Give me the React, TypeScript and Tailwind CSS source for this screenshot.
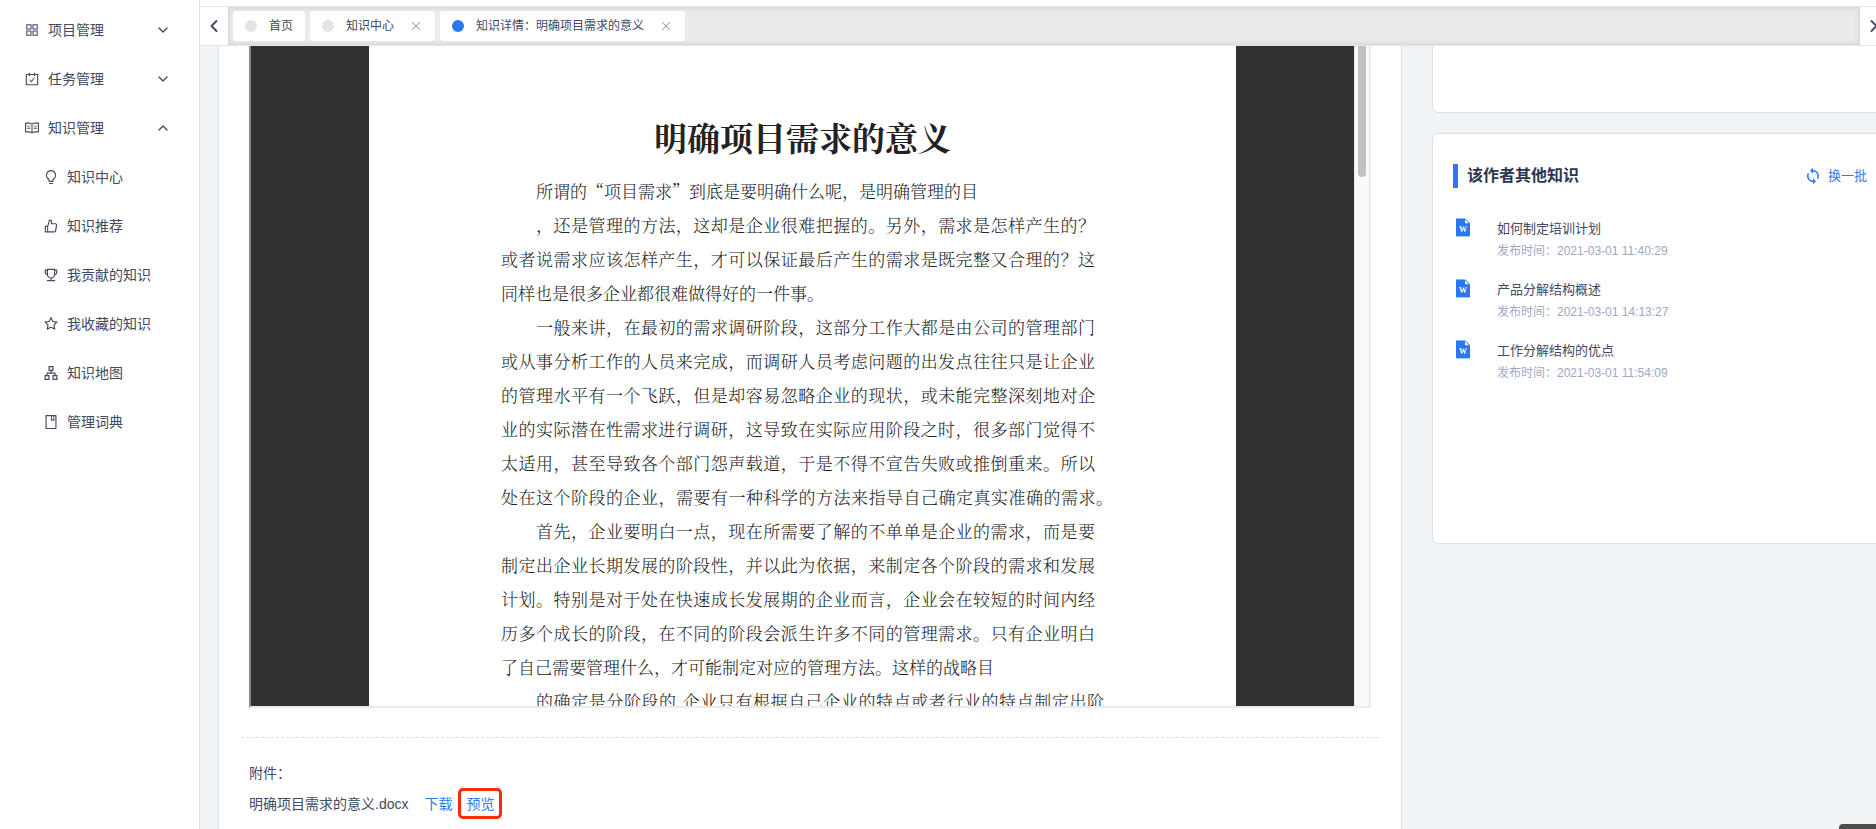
import { useState } from 'react';
import clsx from 'clsx';
import type { IconType } from 'react-icons';
import {
    AiOutlineApartment,
    AiOutlineAppstore,
    AiOutlineBook,
    AiOutlineBulb,
    AiOutlineCarryOut,
    AiOutlineLike,
    AiOutlineRead,
    AiOutlineStar,
    AiOutlineTrophy,
} from 'react-icons/ai';
import { MdSync } from 'react-icons/md';
import { ChevronDown, ChevronLeft, ChevronRight, ChevronUp, X } from 'lucide-react';

type MenuItem = { label: string; icon: IconType; children?: MenuItem[] };

const menu: MenuItem[] = [
    { label: '项目管理', icon: AiOutlineAppstore },
    { label: '任务管理', icon: AiOutlineCarryOut },
    {
        label: '知识管理',
        icon: AiOutlineRead,
        children: [
            { label: '知识中心', icon: AiOutlineBulb },
            { label: '知识推荐', icon: AiOutlineLike },
            { label: '我贡献的知识', icon: AiOutlineTrophy },
            { label: '我收藏的知识', icon: AiOutlineStar },
            { label: '知识地图', icon: AiOutlineApartment },
            { label: '管理词典', icon: AiOutlineBook },
        ],
    },
];

const tabs = [
    { label: '首页', closable: false },
    { label: '知识中心', closable: true },
    { label: '知识详情：明确项目需求的意义', closable: true },
];

// hang: how far the line runs into the right margin
type Line = { text: string; indent?: boolean; short?: boolean; hang?: 'half' | 'full' };

const lines: Line[] = [
    { text: '所谓的“项目需求”到底是要明确什么呢，是明确管理的目', indent: true, short: true },
    { text: '，还是管理的方法，这却是企业很难把握的。另外，需求是怎样产生的？', indent: true },
    { text: '或者说需求应该怎样产生，才可以保证最后产生的需求是既完整又合理的？这' },
    { text: '同样也是很多企业都很难做得好的一件事。', short: true },
    { text: '一般来讲，在最初的需求调研阶段，这部分工作大都是由公司的管理部门', indent: true },
    { text: '或从事分析工作的人员来完成，而调研人员考虑问题的出发点往往只是让企业' },
    { text: '的管理水平有一个飞跃，但是却容易忽略企业的现状，或未能完整深刻地对企' },
    { text: '业的实际潜在性需求进行调研，这导致在实际应用阶段之时，很多部门觉得不' },
    { text: '太适用，甚至导致各个部门怨声载道，于是不得不宣告失败或推倒重来。所以' },
    { text: '处在这个阶段的企业，需要有一种科学的方法来指导自己确定真实准确的需求。', hang: 'full' },
    { text: '首先，企业要明白一点，现在所需要了解的不单单是企业的需求，而是要', indent: true },
    { text: '制定出企业长期发展的阶段性，并以此为依据，来制定各个阶段的需求和发展' },
    { text: '计划。特别是对于处在快速成长发展期的企业而言，企业会在较短的时间内经' },
    { text: '历多个成长的阶段，在不同的阶段会派生许多不同的管理需求。只有企业明白' },
    { text: '了自己需要管理什么，才可能制定对应的管理方法。这样的战略目', short: true },
    {
        text: '的确定是分阶段的,企业只有根据自己企业的特点或者行业的特点制定出阶',
        indent: true,
        hang: 'half',
    },
];

const related = [
    { title: '如何制定培训计划', time: '2021-03-01 11:40:29' },
    { title: '产品分解结构概述', time: '2021-03-01 14:13:27' },
    { title: '工作分解结构的优点', time: '2021-03-01 11:54:09' },
];

function WordIcon() {
    return (
        <svg width="14" height="19" viewBox="0 0 14 19" className="shrink-0">
            <path d="M0 1a1 1 0 0 1 1-1h8l5 5v13a1 1 0 0 1-1 1H1a1 1 0 0 1-1-1z" fill="#a9cbfa" />
            <path d="M0 1.4a.7.7 0 0 1 .7-.7H9l5 4.6V18H0z" fill="#2878f0" />
            <path d="M9 1.5L13 5.2h-3.2a.8.8 0 0 1-.8-.8z" fill="#fff" />
            <text
                x="7"
                y="13.6"
                textAnchor="middle"
                fill="#fff"
                className="font-['Liberation_Serif',serif] text-[8px] font-bold"
            >
                W
            </text>
        </svg>
    );
}

function Sidebar() {
    const [open, setOpen] = useState('知识管理');

    return (
        <aside className="w-[200px] shrink-0 border-r border-[#dcdfe3] bg-white pt-[5px]">
            <ul>
                {menu.map(({ label, icon: Icon, children }) => {
                    const expanded = open === label;
                    const Arrow = expanded ? ChevronUp : ChevronDown;
                    return (
                        <li key={label}>
                            <button
                                className="flex h-[49px] w-full items-center gap-2 pr-7 pl-6"
                                aria-expanded={expanded}
                                onClick={() => setOpen(expanded ? '' : label)}
                            >
                                <Icon className="size-4" />
                                <span>{label}</span>
                                <Arrow className="ml-auto size-4" strokeWidth={2} />
                            </button>
                            {expanded && children && (
                                <ul>
                                    {children.map(({ label, icon: SubIcon }) => (
                                        <li key={label}>
                                            <a
                                                href="#"
                                                className="flex h-[49px] items-center gap-2 pl-[43px]"
                                            >
                                                <SubIcon className="size-4" />
                                                {label}
                                            </a>
                                        </li>
                                    ))}
                                </ul>
                            )}
                        </li>
                    );
                })}
            </ul>
        </aside>
    );
}

function TabBar() {
    const [active, setActive] = useState(2);

    return (
        <nav className="mt-1.5 flex h-10 shrink-0 border-y border-[#e6e6e6] bg-white text-xs">
            <button className="flex w-7 items-center justify-center" aria-label="向左">
                <ChevronLeft className="size-5" strokeWidth={2.25} />
            </button>
            <div className="flex flex-1 items-center gap-[5px] bg-[#ebebeb] px-[5px] shadow-[inset_0_0_5px_1px_#cfcfcf]">
                {tabs.map((tab, i) => (
                    <div
                        key={tab.label}
                        className="flex h-[30px] items-center gap-[15px] rounded-[3px] bg-white px-3"
                    >
                        <button
                            className="flex items-center gap-3"
                            onClick={() => setActive(i)}
                        >
                            <span
                                className={clsx(
                                    'size-3 rounded-full',
                                    i === active ? 'bg-[#2878f0]' : 'bg-[#e1e5e8]'
                                )}
                            />
                            {tab.label}
                        </button>
                        {tab.closable && (
                            <button aria-label="关闭">
                                <X className="size-3.5 text-[#9a9a9a]" strokeWidth={1.75} />
                            </button>
                        )}
                    </div>
                ))}
            </div>
            <button className="flex w-7 items-center justify-center" aria-label="向右">
                <ChevronRight className="size-5" strokeWidth={2.25} />
            </button>
        </nav>
    );
}

function DocumentViewer() {
    return (
        <div className="flex h-[662px] border-r-2 border-b-2 border-l-2 border-[#ebebeb] border-l-[#8a8a8a]">
            <div className="flex-1 overflow-hidden bg-[#313131] px-[118px]">
                <article className="bg-white px-[132px] pt-[67px] pb-16 font-['Noto_Serif_CJK_SC','Noto_Sans_CJK_SC',serif] text-[17px] leading-[34px] whitespace-nowrap text-[#222]">
                    <h1 className="mb-3.5 text-center text-[33px] leading-[47px] font-bold">
                        明确项目需求的意义
                    </h1>
                    <div className="mr-[9px] font-light">
                        {lines.map((line) => (
                            <p
                                key={line.text}
                                className={clsx(
                                    line.indent && 'pl-[35px]',
                                    line.hang === 'half' && '-mr-[9px]',
                                    line.hang === 'full' && '-mr-[18px]',
                                    !line.short && '[text-align-last:justify]'
                                )}
                            >
                                {line.text}
                            </p>
                        ))}
                    </div>
                </article>
            </div>
            <div className="flex w-[15px] shrink-0 justify-center border-l border-[#e6e6e6] bg-[#f9f9f9]">
                <div className="h-[131px] w-2 rounded-b-full bg-[#c1c1c1]" />
            </div>
        </div>
    );
}

function Attachments() {
    return (
        <section className="mt-[29px] border-t border-dashed border-[#dcdfe3] px-2 pt-5">
            <h2 className="leading-[30px]">附件：</h2>
            <div className="flex h-[31px] items-center">
                <span>明确项目需求的意义.docx</span>
                <a href="#" className="ml-4 text-[#2d7cf0]">
                    下载
                </a>
                <a
                    href="#"
                    className="ml-1.5 flex h-[31px] items-center rounded-[5px] border-3 border-[#fb2b0d] px-[5px] text-[#2d7cf0]"
                >
                    预览
                </a>
            </div>
        </section>
    );
}

function RelatedCard() {
    return (
        <section className="mt-5 min-h-[411px] rounded-md border border-[#dcdfe3] bg-white px-5 pt-[30px]">
            <div className="flex h-6 items-center justify-between">
                <h2 className="flex h-6 items-center border-l-5 border-[#3d6bff] pl-[9px] text-base font-bold text-[#2d3550]">
                    该作者其他知识
                </h2>
                <button className="flex items-center gap-1.5 text-[13px] text-[#2d7cf0]">
                    <MdSync className="size-[18px]" />
                    换一批
                </button>
            </div>
            <ul className="mt-[29px] space-y-[15px] pl-[3px]">
                {related.map((item) => (
                    <li key={item.title} className="flex items-start gap-[27px]">
                        <span className="pt-px">
                            <WordIcon />
                        </span>
                        <div>
                            <a href="#" className="block text-[13px] leading-[23px]">
                                {item.title}
                            </a>
                            <p className="text-xs leading-[23px] text-[#9ca8c6]">
                                发布时间：{item.time}
                            </p>
                        </div>
                    </li>
                ))}
            </ul>
        </section>
    );
}

export default function App() {
    return (
        <div className="relative flex h-screen overflow-hidden bg-white font-['Liberation_Sans','Noto_Sans_CJK_SC',sans-serif] text-sm text-[#414963]">
            <Sidebar />
            <main className="-mr-3 flex min-w-0 flex-1 flex-col">
                <TabBar />
                <div className="flex flex-1 gap-[30px] bg-[#f0f4f7] pl-[18px]">
                    <div className="min-w-0 flex-1 border-x border-[#dcdfe3] bg-white px-[22px]">
                        <div className="px-2">
                            <DocumentViewer />
                        </div>
                        <Attachments />
                    </div>
                    <div className="w-[456px] shrink-0">
                        <div className="h-[67px] rounded-b-md border border-t-0 border-[#dcdfe3] bg-white" />
                        <RelatedCard />
                    </div>
                </div>
            </main>
            <div className="absolute right-0 bottom-0 h-[5px] w-[37px] rounded-tl-sm bg-[#4c4c4c]" />
        </div>
    );
}
